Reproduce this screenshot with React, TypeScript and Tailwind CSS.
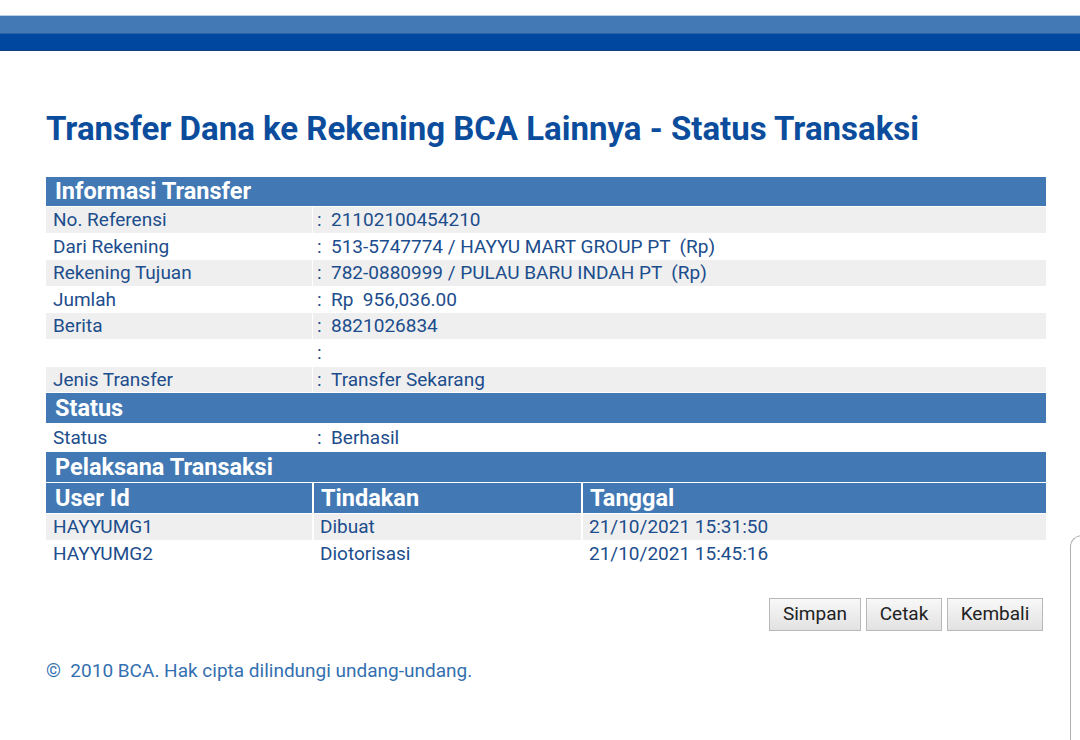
import React from "react";

const font = { fontFamily: "Roboto, 'Noto Sans', sans-serif" };

function Header({ text, h = "h-[30px]" }: { text: string; h?: string }) {
  return (
    <div className={`${h} bg-[#4279b4] flex items-center pl-[9px] pt-[1px] text-white font-bold text-[23.5px]`}>
      {text}
    </div>
  );
}

function Row({ label, value, gray, h = "h-[25.6px]" }: { label: string; value: string; gray: boolean; h?: string }) {
  const bg = gray ? "bg-[#efefef]" : "bg-white";
  return (
    <div className={`${h} flex gap-[1px]`}>
      <div className={`w-[266px] ${bg} flex items-center pl-[7px] pt-[1px]`}>{label}</div>
      <div className={`flex-1 ${bg} flex items-center pl-[4px] pt-[1px] whitespace-pre`}>
        <span className="w-[14px]">:</span>
        <span>{value}</span>
      </div>
    </div>
  );
}

export default function App() {
  const info: [string, string][] = [
    ["No. Referensi", "21102100454210"],
    ["Dari Rekening", "513-5747774 / HAYYU MART GROUP PT  (Rp)"],
    ["Rekening Tujuan", "782-0880999 / PULAU BARU INDAH PT  (Rp)"],
    ["Jumlah", "Rp  956,036.00"],
    ["Berita", "8821026834"],
    ["", ""],
    ["Jenis Transfer", "Transfer Sekarang"],
  ];
  const users: [string, string, string][] = [
    ["HAYYUMG1", "Dibuat", "21/10/2021 15:31:50"],
    ["HAYYUMG2", "Diotorisasi", "21/10/2021 15:45:16"],
  ];
  return (
    <div className="relative w-[1080px] h-[740px] bg-white overflow-hidden" style={font}>
      {/* top bar */}
      <div className="h-[15px] bg-white" />
      <div className="h-[1px] bg-[#b9cfe6]" />
      <div className="h-[17px] bg-[#437ab5]" />
      <div className="h-[1px] bg-[#2a62a6]" />
      <div className="h-[16px] bg-[#0047a0]" />
      <div className="h-[1px] bg-[#0d3d7e]" />

      <div className="pl-[46px] w-[1046px]">
        <h1 className="mt-[58px] text-[33px] font-bold text-[#0b4d9c] leading-[40px]">
          Transfer Dana ke Rekening BCA Lainnya - Status Transaksi
        </h1>

        <div className="mt-[28px] flex flex-col gap-[1px] text-[19px] text-[#1c4d8c]">
          <Header text="Informasi Transfer" h="h-[29px]" />
          {info.map(([l, v], i) => (
            <Row key={i} label={l} value={v} gray={i % 2 === 0} />
          ))}
          <Header text="Status" />
          <Row label="Status" value="Berhasil" gray={false} h="h-[27px]" />
          <Header text="Pelaksana Transaksi" />
          <div className="h-[30px] flex gap-[2px] text-white font-bold text-[23.5px]">
            <div className="w-[266px] bg-[#4279b4] flex items-center pl-[9px] pt-[1px]">User Id</div>
            <div className="w-[267px] bg-[#4279b4] flex items-center pl-[7px] pt-[1px]">Tindakan</div>
            <div className="flex-1 bg-[#4279b4] flex items-center pl-[7px] pt-[1px]">Tanggal</div>
          </div>
          {users.map(([u, t, d], i) => {
            const bg = i === 0 ? "bg-[#efefef]" : "bg-white";
            return (
              <div key={u} className="h-[26px] flex gap-[2px]">
                <div className={`w-[266px] ${bg} flex items-center pl-[7px] pt-[1px]`}>{u}</div>
                <div className={`w-[267px] ${bg} flex items-center pl-[6px] pt-[1px]`}>{t}</div>
                <div className={`flex-1 ${bg} flex items-center pl-[6px] pt-[1px]`}>{d}</div>
              </div>
            );
          })}
        </div>

        <div className="mt-[31px] flex justify-end gap-[5px] pr-[3px]">
          {[
            ["Simpan", "w-[92px]"],
            ["Cetak", "w-[76px]"],
            ["Kembali", "w-[96px]"],
          ].map(([b, w]) => (
            <button
              key={b}
              className={`${w} h-[33px] border border-[#b8b8b8] bg-gradient-to-b from-[#f8f8f8] to-[#e2e2e2] text-[19px] text-[#222] flex items-center justify-center`}
            >
              {b}
            </button>
          ))}
        </div>

        <div className="mt-[26px] text-[19px] text-[#3470b0] whitespace-pre">©  2010 BCA. Hak cipta dilindungi undang-undang.</div>
      </div>

      {/* right-edge overlay frame */}
      <div className="absolute left-[1070px] top-[535px] w-[30px] h-[220px] border-l-[1.5px] border-t-[1.5px] border-[#b0b0b0] rounded-tl-[12px]" />
    </div>
  );
}
